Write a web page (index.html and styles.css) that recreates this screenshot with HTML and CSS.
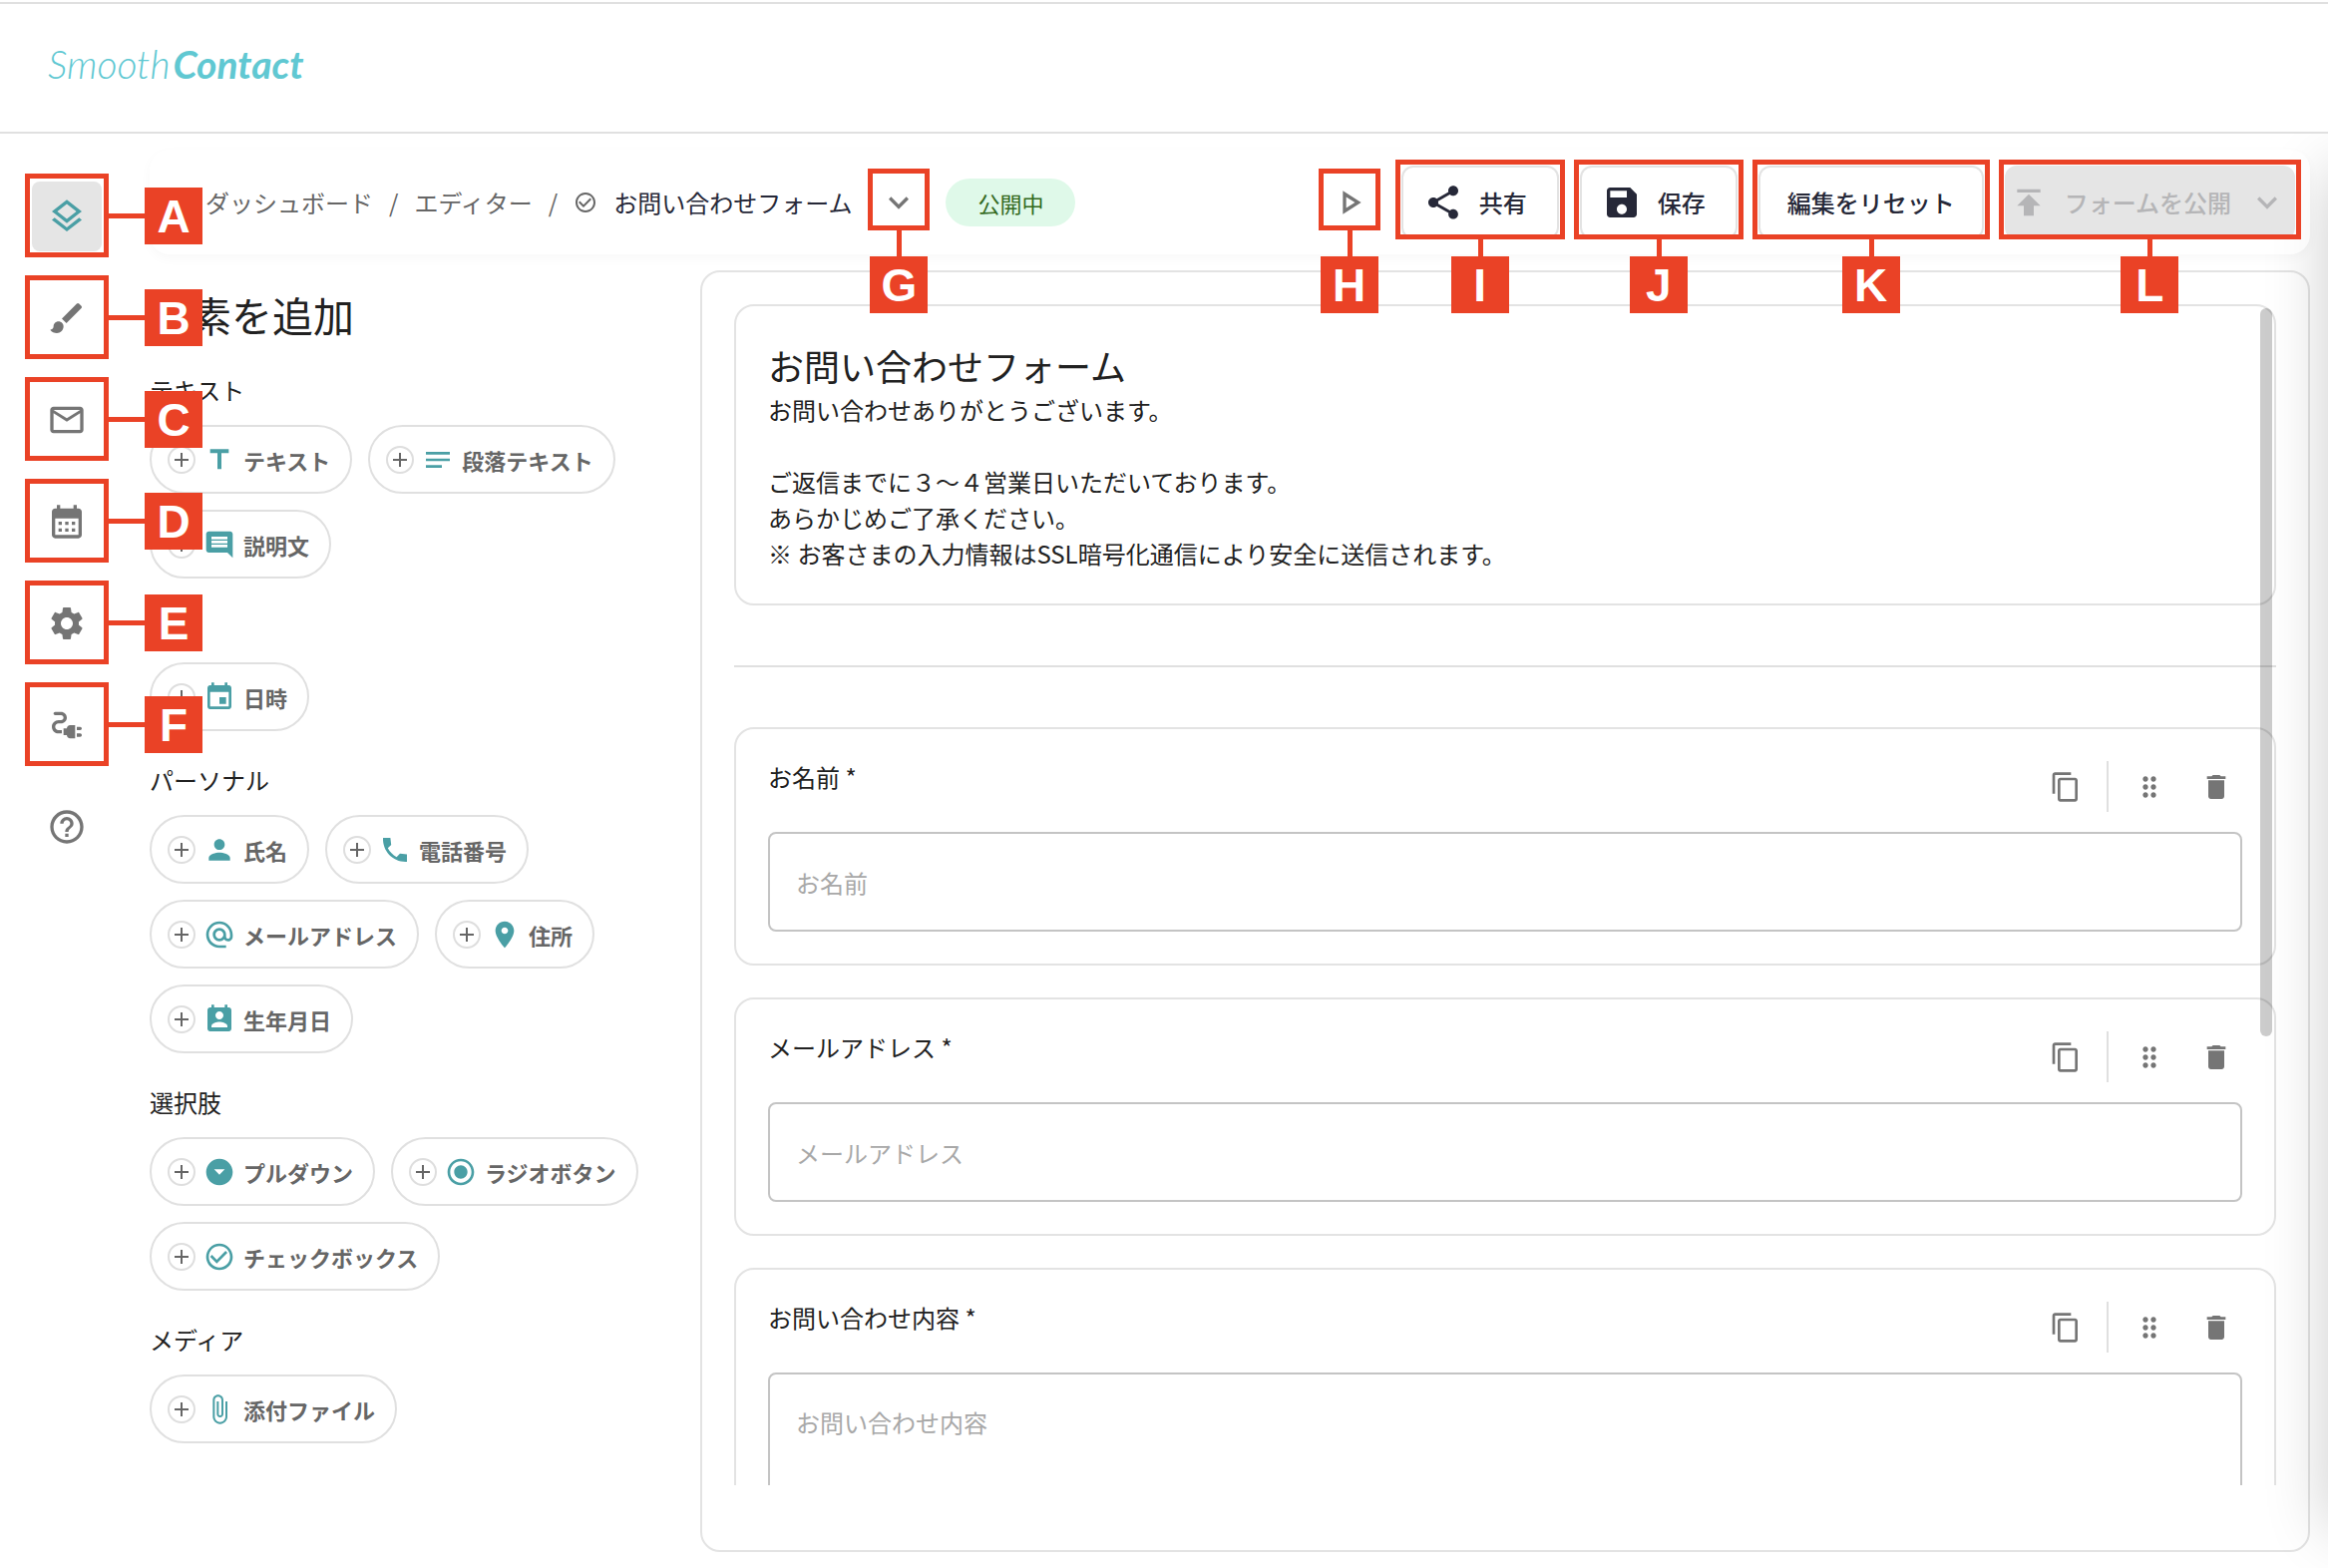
FILE: index.html
```html
<!DOCTYPE html>
<html lang="ja">
<head>
<meta charset="utf-8">
<meta name="viewport" content="width=device-width, initial-scale=1">
<title>SmoothContact</title>
<link rel="stylesheet" href="styles.css">
</head>
<body>
<svg class="sprite" aria-hidden="true">
  <symbol id="i-layers" viewBox="0 0 24 24"><path d="M11.99 18.54l-7.37-5.73L3 14.07l9 7 9-7-1.63-1.27zM12 16l7.36-5.73L21 9l-9-7-9 7 1.63 1.27L12 16zm0-11.47L17.74 9 12 13.47 6.26 9 12 4.53z"/></symbol>
  <symbol id="i-brush" viewBox="0 0 24 24"><path d="M7 14c-1.66 0-3 1.34-3 3 0 1.31-1.16 2-2 2 .92 1.22 2.49 2 4 2 2.21 0 4-1.79 4-4 0-1.66-1.34-3-3-3zm13.71-9.37l-1.34-1.34a1 1 0 0 0-1.41 0L9 12.25 11.75 15l8.96-8.96a1 1 0 0 0 0-1.41z"/></symbol>
  <symbol id="i-mail" viewBox="0 0 24 24"><path d="M22 6c0-1.1-.9-2-2-2H4c-1.1 0-2 .9-2 2v12c0 1.1.9 2 2 2h16c1.1 0 2-.9 2-2V6zm-2 0l-8 5-8-5h16zm0 12H4V8l8 5 8-5v10z"/></symbol>
  <symbol id="i-month" viewBox="0 0 24 24"><path d="M19 4h-1V2h-2v2H8V2H6v2H5c-1.11 0-1.99.9-1.99 2L3 20c0 1.1.89 2 2 2h14c1.1 0 2-.9 2-2V6c0-1.1-.9-2-2-2zm0 16H5V10h14v10zM9 14H7v-2h2v2zm4 0h-2v-2h2v2zm4 0h-2v-2h2v2zm-8 4H7v-2h2v2zm4 0h-2v-2h2v2zm4 0h-2v-2h2v2z"/></symbol>
  <symbol id="i-gear" viewBox="0 0 24 24"><path d="M19.14 12.94c.04-.3.06-.61.06-.94 0-.32-.02-.64-.07-.94l2.03-1.58c.18-.14.23-.41.12-.61l-1.92-3.32c-.12-.22-.37-.29-.59-.22l-2.39.96c-.5-.38-1.03-.7-1.62-.94l-.36-2.54c-.04-.24-.24-.41-.48-.41h-3.84c-.24 0-.43.17-.47.41l-.36 2.54c-.59.24-1.13.57-1.62.94l-2.39-.96c-.22-.08-.47 0-.59.22L2.74 8.87c-.12.21-.08.47.12.61l2.03 1.58c-.05.3-.09.63-.09.94s.02.64.07.94l-2.03 1.58c-.18.14-.23.41-.12.61l1.92 3.32c.12.22.37.29.59.22l2.39-.96c.5.38 1.03.7 1.62.94l.36 2.54c.05.24.24.41.48.41h3.84c.24 0 .44-.17.47-.41l.36-2.54c.59-.24 1.13-.56 1.62-.94l2.39.96c.22.08.47 0 .59-.22l1.92-3.32c.12-.22.07-.47-.12-.61l-2.01-1.58zM12 15.6c-1.98 0-3.6-1.62-3.6-3.6s1.62-3.6 3.6-3.6 3.6 1.62 3.6 3.6-1.62 3.6-3.6 3.6z"/></symbol>
  <symbol id="i-plug" viewBox="0 0 24 24"><path d="M21 14c0-.55-.45-1-1-1h-2v2h2c.55 0 1-.45 1-1zm-1 3h-2v2h2c.55 0 1-.45 1-1s-.45-1-1-1zm-8-3h-2v4h2c0 1.1.9 2 2 2h3v-8h-3c-1.1 0-2 .9-2 2z"/><path d="M5 13c0-1.1.9-2 2-2h1.5c1.93 0 3.5-1.57 3.5-3.5S10.43 4 8.5 4H5c-.55 0-1 .45-1 1s.45 1 1 1h3.5c.83 0 1.5.67 1.5 1.5S9.33 9 8.5 9H7c-2.21 0-4 1.79-4 4s1.79 4 4 4h2v-2H7c-1.1 0-2-.9-2-2z"/></symbol>
  <symbol id="i-help" viewBox="0 0 24 24"><path d="M11 18h2v-2h-2v2zm1-16C6.48 2 2 6.48 2 12s4.48 10 10 10 10-4.48 10-10S17.52 2 12 2zm0 18c-4.41 0-8-3.59-8-8s3.59-8 8-8 8 3.59 8 8-3.59 8-8 8zm0-14c-2.21 0-4 1.79-4 4h2c0-1.1.9-2 2-2s2 .9 2 2c0 2-3 1.75-3 5h2c0-2.25 3-2.5 3-5 0-2.21-1.79-4-4-4z"/></symbol>
  <symbol id="i-check" viewBox="0 0 24 24"><path d="M16.59 7.58L10 14.17l-3.59-3.58L5 12l5 5 8-8zM12 2C6.48 2 2 6.48 2 12s4.48 10 10 10 10-4.48 10-10S17.52 2 12 2zm0 18c-4.42 0-8-3.58-8-8s3.58-8 8-8 8 3.58 8 8-3.58 8-8 8z"/></symbol>
  <symbol id="i-down" viewBox="0 0 24 24"><path d="M7.41 8.59L12 13.17l4.59-4.58L18 10l-6 6-6-6z"/></symbol>
  <symbol id="i-play" viewBox="0 0 24 24"><path d="M10 8.64L15.27 12 10 15.36V8.64M8 5v14l11-7L8 5z"/></symbol>
  <symbol id="i-share" viewBox="0 0 24 24"><path d="M18 16.08c-.76 0-1.44.3-1.96.77L8.91 12.7c.05-.23.09-.46.09-.7s-.04-.47-.09-.7l7.05-4.11c.54.5 1.25.81 2.04.81 1.66 0 3-1.34 3-3s-1.34-3-3-3-3 1.34-3 3c0 .24.04.47.09.7L8.04 9.81C7.5 9.31 6.79 9 6 9c-1.66 0-3 1.34-3 3s1.34 3 3 3c.79 0 1.5-.31 2.04-.81l7.12 4.16c-.05.21-.08.43-.08.65 0 1.61 1.31 2.92 2.92 2.92s2.92-1.31 2.92-2.92-1.31-2.92-2.92-2.92z"/></symbol>
  <symbol id="i-save" viewBox="0 0 24 24"><path d="M17 3H5c-1.11 0-2 .9-2 2v14c0 1.1.89 2 2 2h14c1.1 0 2-.9 2-2V7l-4-4zm-5 16c-1.66 0-3-1.34-3-3s1.34-3 3-3 3 1.34 3 3-1.34 3-3 3zm3-10H5V5h10v4z"/></symbol>
  <symbol id="i-publish" viewBox="0 0 24 24"><path d="M5 4v2h14V4H5zm0 10h4v6h6v-6h4l-7-7-7 7z"/></symbol>
  <symbol id="i-title" viewBox="0 0 24 24"><path d="M5 4v3h5.5v12h3V7H19V4z"/></symbol>
  <symbol id="i-notes" viewBox="0 0 24 24"><path d="M3 18h12v-2H3v2zM3 6v2h18V6H3zm0 7h18v-2H3v2z"/></symbol>
  <symbol id="i-comment" viewBox="0 0 24 24"><path d="M21.99 4c0-1.1-.89-2-1.99-2H4c-1.1 0-2 .9-2 2v12c0 1.1.9 2 2 2h14l4 4-.01-18zM18 14H6v-2h12v2zm0-3H6V9h12v2zm0-3H6V6h12v2z"/></symbol>
  <symbol id="i-event" viewBox="0 0 24 24"><path d="M17 12h-5v5h5v-5zM16 1v2H8V1H6v2H5c-1.11 0-1.99.9-1.99 2L3 19c0 1.1.89 2 2 2h14c1.1 0 2-.9 2-2V5c0-1.1-.9-2-2-2h-1V1h-2zm3 18H5V8h14v11z"/></symbol>
  <symbol id="i-person" viewBox="0 0 24 24"><path d="M12 12c2.21 0 4-1.79 4-4s-1.79-4-4-4-4 1.79-4 4 1.79 4 4 4zm0 2c-2.67 0-8 1.34-8 4v2h16v-2c0-2.66-5.33-4-8-4z"/></symbol>
  <symbol id="i-phone" viewBox="0 0 24 24"><path d="M21 15.46l-5.27-.61-2.52 2.52c-2.83-1.44-5.15-3.75-6.59-6.59l2.53-2.53L8.54 3H3.03C2.45 13.18 10.82 21.55 21 20.97v-5.51z"/></symbol>
  <symbol id="i-at" viewBox="0 0 24 24"><path d="M12 2C6.48 2 2 6.48 2 12s4.48 10 10 10h5v-2h-5c-4.34 0-8-3.66-8-8s3.66-8 8-8 8 3.66 8 8v1.43c0 .79-.71 1.57-1.5 1.57s-1.5-.78-1.5-1.57V12c0-2.76-2.24-5-5-5s-5 2.24-5 5 2.24 5 5 5c1.38 0 2.64-.56 3.54-1.47.65.89 1.77 1.47 2.96 1.47 1.97 0 3.5-1.6 3.5-3.57V12c0-5.52-4.48-10-10-10zm0 13c-1.66 0-3-1.34-3-3s1.34-3 3-3 3 1.34 3 3-1.34 3-3 3z"/></symbol>
  <symbol id="i-place" viewBox="0 0 24 24"><path d="M12 2C8.13 2 5 5.13 5 9c0 5.25 7 13 7 13s7-7.75 7-13c0-3.87-3.13-7-7-7zm0 9.5c-1.38 0-2.5-1.12-2.5-2.5s1.12-2.5 2.5-2.5 2.5 1.12 2.5 2.5-1.12 2.5-2.5 2.5z"/></symbol>
  <symbol id="i-birth" viewBox="0 0 24 24"><path d="M19 3h-1V1h-2v2H8V1H6v2H5c-1.11 0-2 .9-2 2v14c0 1.1.89 2 2 2h14c1.1 0 2-.9 2-2V5c0-1.1-.9-2-2-2zm-7 3c1.66 0 3 1.34 3 3s-1.34 3-3 3-3-1.34-3-3 1.34-3 3-3zm6 12H6v-1c0-2 4-3.1 6-3.1s6 1.1 6 3.1v1z"/></symbol>
  <symbol id="i-dropdown" viewBox="0 0 24 24"><path d="M12 2C6.48 2 2 6.48 2 12s4.48 10 10 10 10-4.48 10-10S17.52 2 12 2zm0 12l-4-4h8l-4 4z"/></symbol>
  <symbol id="i-radio" viewBox="0 0 24 24"><path d="M12 7c-2.76 0-5 2.24-5 5s2.24 5 5 5 5-2.24 5-5-2.24-5-5-5zm0-5C6.48 2 2 6.48 2 12s4.48 10 10 10 10-4.48 10-10S17.52 2 12 2zm0 18c-4.42 0-8-3.58-8-8s3.58-8 8-8 8 3.58 8 8-3.58 8-8 8z"/></symbol>
  <symbol id="i-clip" viewBox="0 0 24 24"><path d="M16.5 6v11.5c0 2.21-1.79 4-4 4s-4-1.79-4-4V5c0-1.38 1.12-2.5 2.5-2.5s2.5 1.12 2.5 2.5v10.5c0 .55-.45 1-1 1s-1-.45-1-1V6H10v9.5c0 1.38 1.12 2.5 2.5 2.5s2.5-1.12 2.5-2.5V5c0-2.21-1.79-4-4-4S7 2.79 7 5v12.5c0 3.04 2.46 5.5 5.5 5.5s5.5-2.46 5.5-5.5V6h-1.5z"/></symbol>
  <symbol id="i-plus" viewBox="0 0 28 28"><circle cx="14" cy="14" r="13" fill="none" stroke="#dedede" stroke-width="2"/><path d="M13 7h2v6h6v2h-6v6h-2v-6H7v-2h6z"/></symbol>
  <symbol id="i-copy" viewBox="0 0 24 24"><path d="M16 1H4c-1.1 0-2 .9-2 2v14h2V3h12V1zm3 4H8c-1.1 0-2 .9-2 2v14c0 1.1.9 2 2 2h11c1.1 0 2-.9 2-2V7c0-1.1-.9-2-2-2zm0 16H8V7h11v14z"/></symbol>
  <symbol id="i-drag" viewBox="0 0 24 24"><path d="M11 18c0 1.1-.9 2-2 2s-2-.9-2-2 .9-2 2-2 2 .9 2 2zm-2-8c-1.1 0-2 .9-2 2s.9 2 2 2 2-.9 2-2-.9-2-2-2zm0-6c-1.1 0-2 .9-2 2s.9 2 2 2 2-.9 2-2-.9-2-2-2zm6 4c1.1 0 2-.9 2-2s-.9-2-2-2-2 .9-2 2 .9 2 2 2zm0 2c-1.1 0-2 .9-2 2s.9 2 2 2 2-.9 2-2-.9-2-2-2zm0 6c-1.1 0-2 .9-2 2s.9 2 2 2 2-.9 2-2-.9-2-2-2z"/></symbol>
  <symbol id="i-trash" viewBox="0 0 24 24"><path d="M6 19c0 1.1.9 2 2 2h8c1.1 0 2-.9 2-2V7H6v12zM19 4h-3.5l-1-1h-5l-1 1H5v2h14V4z"/></symbol>
</svg>

<div class="page">
  <header class="site-header">
    <a class="logo" href="#"><span class="logo-light">Smooth</span><span class="logo-bold">Contact</span></a>
  </header>

  <div class="workspace">
    <nav class="rail" aria-label="エディターメニュー">
      <div class="rail-item"><button class="rail-button is-active" aria-label="要素"><svg class="icon-l"><use href="#i-layers"/></svg></button><span class="marker marker-side"><b>A</b></span></div>
      <div class="rail-item"><button class="rail-button" aria-label="デザイン"><svg class="icon-l"><use href="#i-brush"/></svg></button><span class="marker marker-side"><b>B</b></span></div>
      <div class="rail-item"><button class="rail-button" aria-label="メール"><svg class="icon-l"><use href="#i-mail"/></svg></button><span class="marker marker-side"><b>C</b></span></div>
      <div class="rail-item"><button class="rail-button" aria-label="スケジュール"><svg class="icon-l"><use href="#i-month"/></svg></button><span class="marker marker-side"><b>D</b></span></div>
      <div class="rail-item"><button class="rail-button" aria-label="設定"><svg class="icon-l"><use href="#i-gear"/></svg></button><span class="marker marker-side"><b>E</b></span></div>
      <div class="rail-item"><button class="rail-button" aria-label="外部連携"><svg class="icon-l"><use href="#i-plug"/></svg></button><span class="marker marker-side"><b>F</b></span></div>
      <div class="rail-item"><button class="rail-button" aria-label="ヘルプ"><svg class="icon-l"><use href="#i-help"/></svg></button></div>
    </nav>

    <div class="editor">
      <div class="toolbar">
        <nav class="breadcrumb" aria-label="パンくず">
          <a href="#">ダッシュボード</a>
          <span>/</span>
          <a href="#">エディター</a>
          <span>/</span>
          <svg class="icon-xs"><use href="#i-check"/></svg>
          <span class="current">お問い合わせフォーム</span>
        </nav>
        <div class="marked"><button class="icon-button" aria-label="フォームを切り替え"><svg class="icon-l"><use href="#i-down"/></svg></button><span class="marker marker-square"><b>G</b></span></div>
        <span class="status">公開中</span>
        <div class="actions">
          <div class="marked"><button class="icon-button" aria-label="プレビュー"><svg class="icon-l"><use href="#i-play"/></svg></button><span class="marker marker-square"><b>H</b></span></div>
          <div class="marked"><button class="button"><svg class="icon-l"><use href="#i-share"/></svg>共有</button><span class="marker marker-wide"><b>I</b></span></div>
          <div class="marked"><button class="button"><svg class="icon-l"><use href="#i-save"/></svg>保存</button><span class="marker marker-wide"><b>J</b></span></div>
          <div class="marked"><button class="button button-text">編集をリセット</button><span class="marker marker-wide"><b>K</b></span></div>
          <div class="marked"><button class="button button-publish" disabled><svg class="icon-l"><use href="#i-publish"/></svg>フォームを公開<svg class="icon-l"><use href="#i-down"/></svg></button><span class="marker marker-wide"><b>L</b></span></div>
        </div>
      </div>

      <div class="columns">
        <aside class="palette">
          <h2>要素を追加</h2>
          <section>
            <h3>テキスト</h3>
            <div class="chips">
              <button class="chip"><svg class="icon-plus"><use href="#i-plus"/></svg><svg class="icon-m"><use href="#i-title"/></svg>テキスト</button>
              <button class="chip"><svg class="icon-plus"><use href="#i-plus"/></svg><svg class="icon-m"><use href="#i-notes"/></svg>段落テキスト</button>
              <button class="chip"><svg class="icon-plus"><use href="#i-plus"/></svg><svg class="icon-m"><use href="#i-comment"/></svg>説明文</button>
            </div>
          </section>
          <section>
            <h3>日時</h3>
            <div class="chips">
              <button class="chip"><svg class="icon-plus"><use href="#i-plus"/></svg><svg class="icon-m"><use href="#i-event"/></svg>日時</button>
            </div>
          </section>
          <section>
            <h3>パーソナル</h3>
            <div class="chips">
              <button class="chip"><svg class="icon-plus"><use href="#i-plus"/></svg><svg class="icon-m"><use href="#i-person"/></svg>氏名</button>
              <button class="chip"><svg class="icon-plus"><use href="#i-plus"/></svg><svg class="icon-m"><use href="#i-phone"/></svg>電話番号</button>
              <button class="chip"><svg class="icon-plus"><use href="#i-plus"/></svg><svg class="icon-m"><use href="#i-at"/></svg>メールアドレス</button>
              <button class="chip"><svg class="icon-plus"><use href="#i-plus"/></svg><svg class="icon-m"><use href="#i-place"/></svg>住所</button>
              <button class="chip"><svg class="icon-plus"><use href="#i-plus"/></svg><svg class="icon-m"><use href="#i-birth"/></svg>生年月日</button>
            </div>
          </section>
          <section>
            <h3>選択肢</h3>
            <div class="chips">
              <button class="chip"><svg class="icon-plus"><use href="#i-plus"/></svg><svg class="icon-m"><use href="#i-dropdown"/></svg>プルダウン</button>
              <button class="chip"><svg class="icon-plus"><use href="#i-plus"/></svg><svg class="icon-m"><use href="#i-radio"/></svg>ラジオボタン</button>
              <button class="chip"><svg class="icon-plus"><use href="#i-plus"/></svg><svg class="icon-m"><use href="#i-check"/></svg>チェックボックス</button>
            </div>
          </section>
          <section>
            <h3>メディア</h3>
            <div class="chips">
              <button class="chip"><svg class="icon-plus"><use href="#i-plus"/></svg><svg class="icon-m"><use href="#i-clip"/></svg>添付ファイル</button>
            </div>
          </section>
        </aside>

        <main class="canvas">
          <div class="canvas-scroll">
            <section class="card intro">
              <h1>お問い合わせフォーム</h1>
              <p>お問い合わせありがとうございます。<br><br>ご返信までに３〜４営業日いただいております。<br>あらかじめご了承ください。<br>※ お客さまの入力情報はSSL暗号化通信により安全に送信されます。</p>
            </section>
            <hr>
            <div class="fields">
              <section class="card field">
                <div class="field-head">
                  <label for="name">お名前 *</label>
                  <div class="field-tools">
                    <button aria-label="複製"><svg class="icon-m"><use href="#i-copy"/></svg></button>
                    <span class="rule"></span>
                    <button aria-label="並べ替え"><svg class="icon-m"><use href="#i-drag"/></svg></button>
                    <button aria-label="削除"><svg class="icon-m"><use href="#i-trash"/></svg></button>
                  </div>
                </div>
                <input id="name" type="text" placeholder="お名前">
              </section>
              <section class="card field">
                <div class="field-head">
                  <label for="email">メールアドレス *</label>
                  <div class="field-tools">
                    <button aria-label="複製"><svg class="icon-m"><use href="#i-copy"/></svg></button>
                    <span class="rule"></span>
                    <button aria-label="並べ替え"><svg class="icon-m"><use href="#i-drag"/></svg></button>
                    <button aria-label="削除"><svg class="icon-m"><use href="#i-trash"/></svg></button>
                  </div>
                </div>
                <input id="email" type="email" placeholder="メールアドレス">
              </section>
              <section class="card field">
                <div class="field-head">
                  <label for="body">お問い合わせ内容 *</label>
                  <div class="field-tools">
                    <button aria-label="複製"><svg class="icon-m"><use href="#i-copy"/></svg></button>
                    <span class="rule"></span>
                    <button aria-label="並べ替え"><svg class="icon-m"><use href="#i-drag"/></svg></button>
                    <button aria-label="削除"><svg class="icon-m"><use href="#i-trash"/></svg></button>
                  </div>
                </div>
                <textarea id="body" placeholder="お問い合わせ内容"></textarea>
              </section>
            </div>
          </div>
          <div class="scroll-thumb"></div>
        </main>
      </div>
    </div>
    <div class="drawer" aria-hidden="true"></div>
  </div>
</div>
</body>
</html>
```

FILE: styles.css
```css
:root {
  --teal: #4a9fa5;
  --grey: #757575;
  --line: #e3e3e3;
  --ink: #212121;
  --navy: #262838;
  --mark: #ea4226;
}

* { box-sizing: border-box; }

body {
  margin: 0;
  background: #fff;
  color: var(--ink);
  font: 24px/36px "Noto Sans CJK JP", sans-serif;
}

button, input, textarea {
  font: inherit;
  color: inherit;
  background: none;
  border: 0;
  margin: 0;
  padding: 0;
}

a { color: inherit; text-decoration: none; }
h1, h2, h3, p { margin: 0; font-weight: 400; }
svg { display: block; flex: none; fill: currentColor; }

.sprite { position: absolute; width: 0; height: 0; }
.icon-l { width: 40px; height: 40px; }
.icon-m { width: 32px; height: 32px; }
.icon-plus { width: 28px; height: 28px; }
.icon-xs { width: 24px; height: 24px; }

.page {
  display: flex;
  flex-direction: column;
  height: 100vh;
  padding-top: 2px;
}

/* Header */
.site-header {
  display: flex;
  align-items: center;
  flex: none;
  height: 132px;
  padding: 0 48px 8px;
  border-top: 2px solid #e0e0e0;
  border-bottom: 2px solid #e0e0e0;
}

.logo {
  display: flex;
  gap: 3px;
  color: #60c8d2;
  font: italic 39px/48px Lato, sans-serif;
}
.logo-light { font-weight: 300; }
.logo-bold { font-weight: 700; }

/* Workspace */
.workspace {
  position: relative;
  display: flex;
  flex: 1;
  min-height: 0;
  padding: 0 18px 16px 0;
  overflow: hidden;
}

.rail {
  position: relative;
  z-index: 3;
  display: flex;
  flex-direction: column;
  flex: none;
  gap: 32px;
  width: 150px;
  padding: 48px 0 0 32px;
  color: var(--grey);
}

.rail-item { position: relative; width: 70px; }

.rail-button {
  display: flex;
  align-items: center;
  justify-content: center;
  width: 70px;
  height: 70px;
  border-radius: 8px;
}
.rail-button.is-active { background: #e5e5e5; color: var(--teal); }

.editor {
  display: flex;
  flex-direction: column;
  flex: 1;
  gap: 16px;
  min-width: 0;
  padding-top: 16px;
}

.toolbar {
  position: relative;
  z-index: 2;
  display: flex;
  align-items: center;
  flex: none;
  gap: 16px;
  height: 105px;
  padding: 0 15px 0 56px;
  border-radius: 20px;
  background: rgba(255, 255, 255, .6);
  box-shadow: 0 4px 12px rgba(0, 0, 0, .03);
}

.breadcrumb {
  display: flex;
  align-items: center;
  gap: 16px;
  color: #666;
  white-space: nowrap;
}
.breadcrumb .current { color: var(--navy); }

.icon-button {
  display: flex;
  align-items: center;
  justify-content: center;
  width: 62px;
  height: 62px;
  color: var(--grey);
}

.status {
  padding: 6px 32px;
  border-radius: 24px;
  background: #dff9e9;
  color: #33691e;
  font-size: 22px;
  white-space: nowrap;
}

.actions { display: flex; align-items: center; gap: 21px; margin-left: auto; }

.button {
  display: flex;
  align-items: center;
  gap: 16px;
  height: 74px;
  padding: 0 30px 0 20px;
  border: 2px solid var(--line);
  border-radius: 12px;
  color: var(--navy);
  font-weight: 500;
  white-space: nowrap;
}
.button-text { padding: 0 27px; }
.button-publish {
  padding: 0 6px 0 2px;
  border-color: #e5e5e5;
  background: #e5e5e5;
  color: #b5b5b7;
}

/* Lettered callouts laid over the controls */
.marked { position: relative; }

.marker {
  position: absolute;
  border: 5px solid var(--mark);
  pointer-events: none;
}
.marker::after {
  content: "";
  position: absolute;
  background: var(--mark);
}
.marker b {
  position: absolute;
  width: 58px;
  height: 57px;
  background: var(--mark);
  color: #fff;
  font: 700 46px/58px "Liberation Sans", Arial, sans-serif;
  text-align: center;
}
.marker-side { inset: -8px -7px -6px; }
.marker-side::after { top: 35px; left: 100%; width: 50px; height: 5px; }
.marker-side b { top: 9px; left: 115px; }
.marker-square { inset: -3px 0 3px; --drop: 31px; }
.marker-wide { inset: -6px -6px 0; --drop: 22px; }
.marker-square::after, .marker-wide::after {
  top: 100%;
  left: calc(50% - 2px);
  width: 5px;
  height: 32px;
}
.marker-square b, .marker-wide b {
  top: calc(100% + var(--drop));
  left: calc(50% - 29px);
}

/* Element palette */
.columns {
  display: grid;
  grid-template-columns: 552px minmax(0, 1fr);
  flex: 1;
  min-height: 0;
}

.palette {
  display: flex;
  flex-direction: column;
  gap: 31px;
  padding: 18px 16px 0 0;
}
.palette h2 { font-size: 41px; line-height: 53px; }
.palette h3 { margin-bottom: 17px; font-size: 24px; line-height: 36px; }

.chips { display: flex; flex-wrap: wrap; gap: 16px; }

.chip {
  display: flex;
  align-items: center;
  gap: 8px;
  height: 69px;
  padding: 0 20px 0 16px;
  border: 2px solid #e0e0e0;
  border-radius: 35px;
  color: #666;
  font-size: 22px;
  font-weight: 700;
  white-space: nowrap;
}
.chip .icon-m { color: var(--teal); }

/* Form canvas */
.canvas {
  position: relative;
  display: flex;
  min-height: 0;
  padding: 32px 32px 65px;
  border: 2px solid var(--line);
  border-radius: 20px;
}
.canvas-scroll { flex: 1; min-width: 0; overflow: hidden; }

.scroll-thumb {
  position: absolute;
  top: 36px;
  right: 36px;
  width: 12px;
  height: 57%;
  border-radius: 6px;
  background: rgba(0, 0, 0, .2);
}

.card { border: 2px solid var(--line); border-radius: 20px; }
.intro { padding: 32px; }
.intro h1 { font-size: 36px; line-height: 54px; }

.canvas hr {
  height: 2px;
  margin: 60px 0;
  border: 0;
  background: #e0e0e0;
}

.fields { display: flex; flex-direction: column; gap: 32px; }

.field { padding: 32px; }
.field-head {
  display: flex;
  justify-content: space-between;
  height: 51px;
  margin-bottom: 20px;
}
.field-head label { line-height: 32px; }
.field-tools { display: flex; gap: 15px; color: var(--grey); }
.field-tools button {
  display: flex;
  align-items: center;
  justify-content: center;
  width: 52px;
}
.rule { width: 2px; background: #e0e0e0; }

.field input, .field textarea {
  display: block;
  width: 100%;
  height: 100px;
  padding: 0 26px;
  border: 2px solid #c4c4c4;
  border-radius: 8px;
}
.field textarea { height: 240px; padding: 30px 26px; resize: none; }
.field ::placeholder { color: #a8a8a8; opacity: 1; }

/* Closed side drawer, parked off the right edge */
.drawer {
  position: absolute;
  z-index: 1;
  top: 36px;
  bottom: 40px;
  left: 100%;
  width: 480px;
  box-shadow: 0 0 60px rgba(0, 0, 0, .2);
  pointer-events: none;
}
```
